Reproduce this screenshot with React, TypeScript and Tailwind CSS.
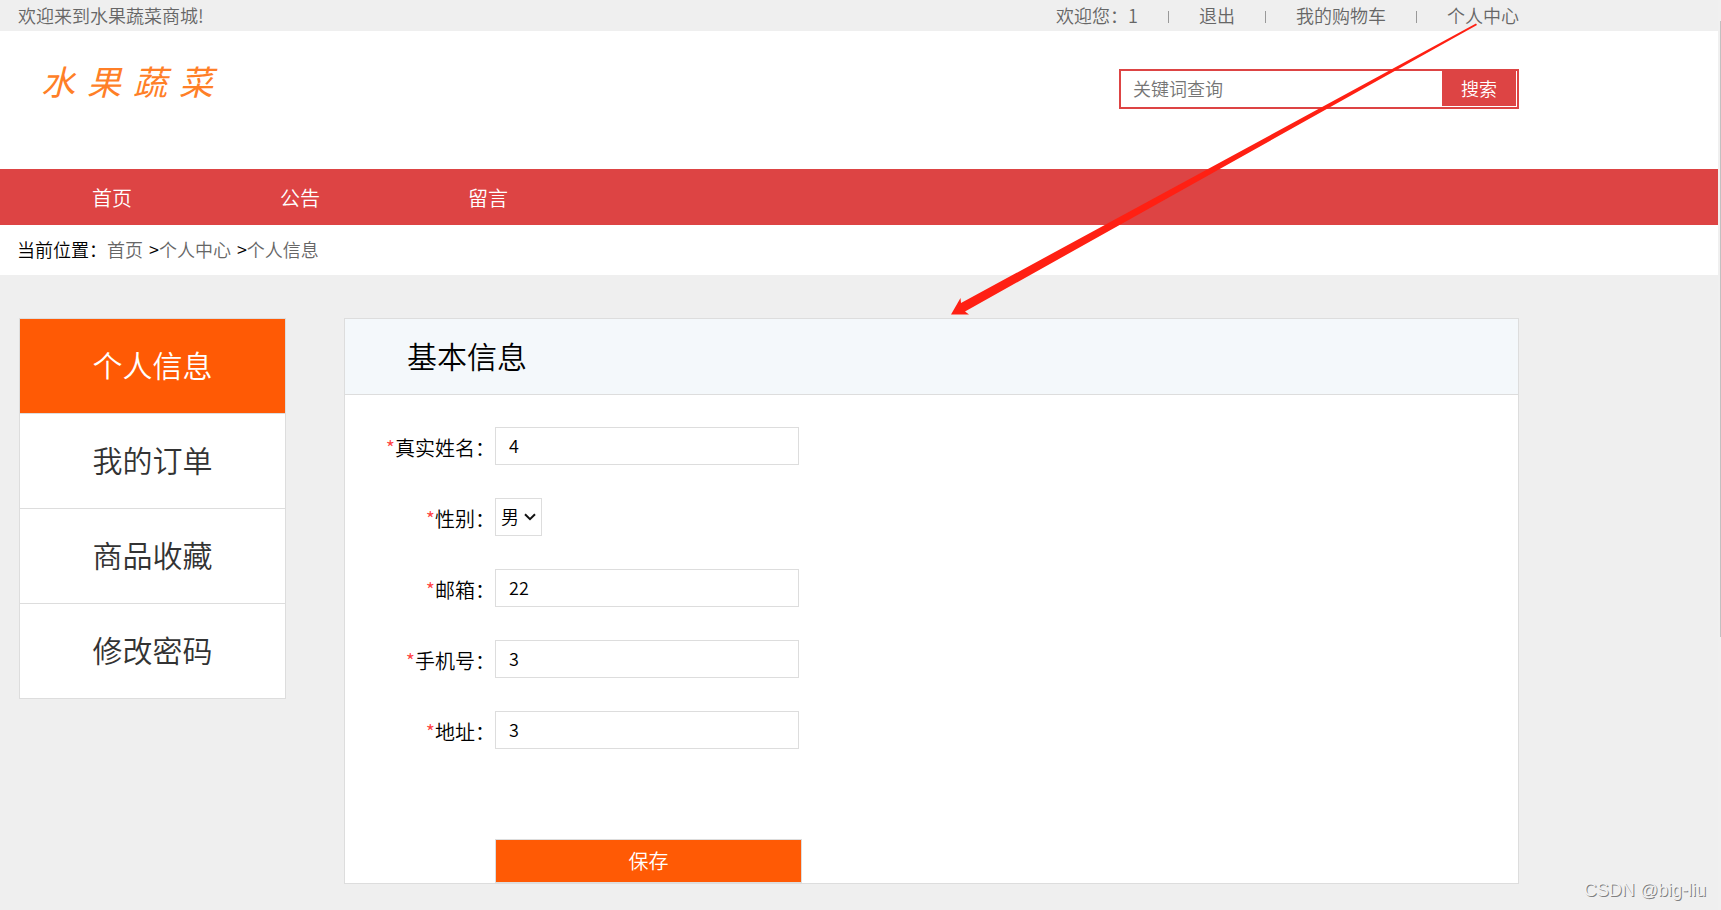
import { useState } from 'react';

const topLinks = ['退出', '我的购物车', '个人中心'];
const navItems = ['首页', '公告', '留言'];
const sideItems = ['个人信息', '我的订单', '商品收藏', '修改密码'];

type FieldProps = {
  id: string;
  label: string;
  children: React.ReactNode;
};

function Field({ id, label, children }: FieldProps) {
  return (
    <div className="flex items-center">
      <label htmlFor={id} className="w-[150px] shrink-0 pt-1 text-right text-xl">
        <span className="text-[#ff4444]">*</span>
        {label}：
      </label>
      {children}
    </div>
  );
}

const inputClass =
  'h-[38px] w-[304px] border border-[#dddddd] bg-white px-[13px] pb-0.5 text-lg focus:outline-none';

export default function App() {
  const [keyword, setKeyword] = useState('');
  const [active, setActive] = useState('个人信息');
  const [form, setForm] = useState({ name: '4', gender: '男', email: '22', phone: '3', address: '3' });

  const update = (e: React.ChangeEvent<HTMLInputElement | HTMLSelectElement>) => {
    setForm({ ...form, [e.target.name]: e.target.value });
  };

  return (
    <div className="relative flex min-h-screen overflow-hidden bg-[#efefef] font-['Noto_Sans_CJK_SC',sans-serif] font-[350] text-black">
      <div className="min-w-0 flex-1">
        {/* Top bar */}
        <div className="ml-[18px] flex h-[31px] max-w-[1501px] items-center justify-between pb-0.5 text-lg text-[#666666]">
          <p>欢迎来到水果蔬菜商城!</p>
          <div className="flex items-center gap-[30px]">
            <span>欢迎您：1</span>
            {topLinks.map((text) => (
              <div key={text} className="flex items-center gap-[30px]">
                <span className="mt-1 h-3 w-px bg-[#999999]" />
                <a href="#">{text}</a>
              </div>
            ))}
          </div>
        </div>

        {/* Logo and search */}
        <header className="bg-white">
          <div className="ml-[19px] flex h-[138px] max-w-[1500px] items-start justify-between">
            <a
              href="#"
              aria-label="水果蔬菜"
              className="mt-[30px] ml-[22px] flex gap-3 text-[34px] leading-10 font-normal text-[#ff7f27] italic"
            >
              <span>水</span>
              <span>果</span>
              <span>蔬</span>
              <span>菜</span>
            </a>
            <form
              onSubmit={(e) => e.preventDefault()}
              className="mt-[38px] flex h-10 w-[400px] items-start border-2 border-[#dd4444] pr-px"
            >
              <input
                type="text"
                aria-label="关键词查询"
                placeholder="关键词查询"
                value={keyword}
                onChange={(e) => setKeyword(e.target.value)}
                className="h-9 min-w-0 flex-1 px-3 pb-0.5 text-lg placeholder:text-[#757575] focus:outline-none"
              />
              <button type="submit" className="h-[35px] w-[74px] bg-[#dd4444] pb-0.5 text-lg text-white">
                搜索
              </button>
            </form>
          </div>
        </header>

        {/* Main nav */}
        <nav className="flex h-14 items-center bg-[#dd4444] pt-0.5 pl-[18px] text-xl text-white">
          {navItems.map((item) => (
            <a key={item} href="#" className="w-[188px] text-center">
              {item}
            </a>
          ))}
        </nav>

        {/* Breadcrumb */}
        <div className="flex h-[50px] items-center bg-white pb-0.5 pl-[17px] text-lg">
          <span>当前位置：</span>
          <a href="#" className="text-[#666666]">首页</a>
          <span className="ml-1.5">&gt;</span>
          <a href="#" className="text-[#666666]">个人中心</a>
          <span className="ml-1.5">&gt;</span>
          <a href="#" className="text-[#666666]">个人信息</a>
        </div>

        <main className="mt-[43px] ml-[19px] flex max-w-[1500px] items-start gap-[58px]">
          {/* Side menu */}
          <ul className="w-[267px] shrink-0 border border-b-0 border-[#dddddd] bg-white">
            {sideItems.map((item) => (
              <li key={item} className="border-b border-[#dddddd]">
                <a
                  href="#"
                  onClick={() => setActive(item)}
                  className={
                    item === active
                      ? 'flex h-[94px] items-center justify-center bg-[#ff5a05] pb-1 text-3xl text-white'
                      : 'flex h-[94px] items-center justify-center pb-1 text-3xl text-[#333333]'
                  }
                >
                  {item}
                </a>
              </li>
            ))}
          </ul>

          {/* Profile form */}
          <section className="min-w-0 flex-1 border border-[#dddddd] bg-white">
            <h2 className="flex h-[76px] items-center border-b border-[#dddddd] bg-[#f4f8fb] pb-1 pl-[62px] text-3xl font-[350]">
              基本信息
            </h2>
            <form onSubmit={(e) => e.preventDefault()} className="pt-8">
              <div className="space-y-[33px]">
                <Field id="name" label="真实姓名">
                  <input id="name" name="name" value={form.name} onChange={update} className={inputClass} />
                </Field>
                <Field id="gender" label="性别">
                  <div className="relative">
                    <select
                      id="gender"
                      name="gender"
                      value={form.gender}
                      onChange={update}
                      className="block h-[38px] w-[47px] appearance-none border border-[#dddddd] bg-white pb-0.5 pl-[5px] text-lg focus:outline-none"
                    >
                      <option>男</option>
                      <option>女</option>
                    </select>
                    <svg
                      className="pointer-events-none absolute top-[15px] right-1.5"
                      width="12"
                      height="8"
                      viewBox="0 0 12 8"
                      fill="none"
                      stroke="#111111"
                      strokeWidth="2"
                      aria-hidden="true"
                    >
                      <path d="M1 1.2 6 6.2 11 1.2" />
                    </svg>
                  </div>
                </Field>
                <Field id="email" label="邮箱">
                  <input id="email" name="email" value={form.email} onChange={update} className={inputClass} />
                </Field>
                <Field id="phone" label="手机号">
                  <input id="phone" name="phone" value={form.phone} onChange={update} className={inputClass} />
                </Field>
                <Field id="address" label="地址">
                  <input id="address" name="address" value={form.address} onChange={update} className={inputClass} />
                </Field>
              </div>
              <button
                type="submit"
                className="mt-[90px] ml-[150px] block h-11 w-[307px] border border-[#dddddd] bg-[#ff5a05] text-xl text-white"
              >
                保存
              </button>
            </form>
          </section>
        </main>
      </div>

      {/* Scroll track */}
      <div className="flex w-[3px] shrink-0 justify-end bg-[#f0f0f0] pt-[21px]">
        <div className="h-[616px] w-px bg-[#c1c1c1]" />
      </div>

      {/* Arrow from the account link to the form */}
      <svg
        className="pointer-events-none absolute top-[23px] left-[950px]"
        width="528"
        height="294"
        viewBox="0 0 528 294"
        fill="#ff2013"
        aria-hidden="true"
      >
        <path d="M1 291.5 10.5 275 11 280 526 0.5 527 2 15 288.5 19 291.5Z" />
      </svg>

      <p className="absolute right-[15px] bottom-2.5 font-['Liberation_Sans',sans-serif] text-lg leading-5 font-normal text-[#f2f2f2] [text-shadow:1px_1px_0_#808080]">
        CSDN @big-liu
      </p>
    </div>
  );
}
